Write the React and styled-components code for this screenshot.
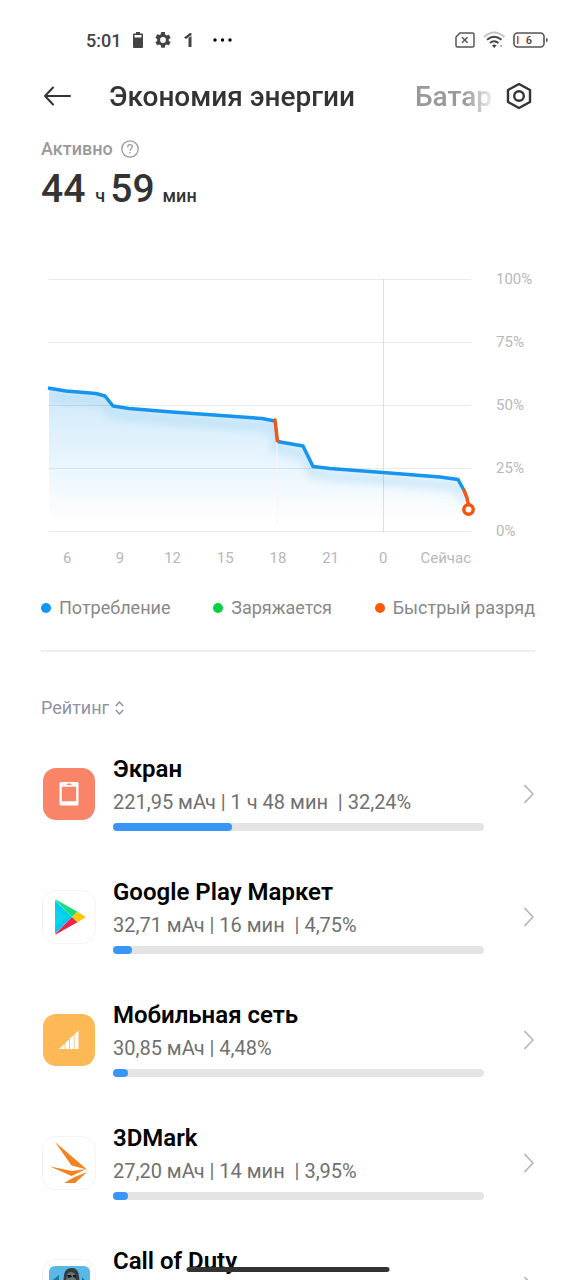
import React from 'react'
import styled, { createGlobalStyle } from 'styled-components'

const GlobalStyle = createGlobalStyle`
* {
    box-sizing:border-box;
}
body {
    margin:0;
    background-color:#fff;
    font-family:Roboto, "Noto Sans", sans-serif;
}
button {
    padding:0;
    border:0;
    background:none;
    color:inherit;
    font:inherit;
    text-align:left;
    cursor:pointer;
}
`
const Screen = styled.div`
height:100vh;
display:flex;
flex-direction:column;
overflow:hidden;
position:relative;
color:#333;
`
const StatusBar = styled.div`
display:flex;
justify-content:space-between;
align-items:center;
height:40px;
margin-top:20px;
padding:0 28px 0 86px;
flex-shrink:0;
`
const StatusGroup = styled.div`
display:flex;
align-items:center;
gap:${props => props.gap}px;
`
const Clock = styled.span`
font-size:18px;
font-weight:500;
color:#444;
`
const MoreDots = styled.svg`
margin-left:8px;
`
const Header = styled.header`
display:flex;
align-items:center;
height:72px;
padding:0 43px;
flex-shrink:0;
`
const IconButton = styled.button`
display:flex;
flex-shrink:0;
`
const Tabs = styled.nav`
display:flex;
flex:1;
min-width:0;
gap:60px;
margin:2px 14px 0 38px;
overflow:hidden;
mask-image:linear-gradient(to right, #000 93%, transparent 102%);
`
const Tab = styled.button`
font-size:28px;
line-height:40px;
font-weight:500;
white-space:nowrap;
color:${props => props.selected ? '#333' : '#999'};
`
const Summary = styled.section`
padding:5px 41px 0;
flex-shrink:0;
`
const SummaryLabel = styled.div`
display:flex;
align-items:center;
gap:8px;
font-size:18px;
line-height:24px;
font-weight:500;
color:#999;
`
const Duration = styled.div`
display:flex;
align-items:baseline;
line-height:48px;
margin-top:4px;
`
const Big = styled.span`
font-size:39px;
font-weight:500;
`
const Unit = styled.span`
font-size:18px;
font-weight:500;
margin:0 ${props => props.right}px 0 ${props => props.left}px;
`
const ChartBox = styled.section`
display:grid;
grid-template-columns:1fr 64px;
padding:59px 41px 0;
flex-shrink:0;
`
const Plot = styled.svg`
display:block;
width:calc(100% - 8px);
height:254px;
margin-left:8px;
overflow:visible;
`
const YAxis = styled.div`
display:flex;
flex-direction:column;
justify-content:space-between;
height:272px;
margin-top:-10px;
padding-left:25px;
font-size:15px;
line-height:20px;
color:#b8b8b8;
`
const XAxis = styled.div`
display:grid;
grid-template-columns:repeat(7, 6fr) 7fr;
margin-top:15px;
font-size:15px;
line-height:20px;
text-align:center;
color:#b8b8b8;
> :last-child{
    justify-self:end;
}
`
const Legend = styled.ul`
display:flex;
justify-content:space-between;
list-style:none;
margin:28px 41px 0;
padding:0 0 30px;
border-bottom:2px solid #eee;
flex-shrink:0;
`
const LegendItem = styled.li`
display:flex;
align-items:center;
gap:8px;
font-size:18px;
line-height:24px;
color:#888;
white-space:nowrap;
&::before{
    content:'';
    width:10px;
    height:10px;
    border-radius:50%;
    background-color:${props => props.color};
}
`
const SortButton = styled.button`
display:flex;
align-items:center;
align-self:flex-start;
gap:6px;
margin:44px 41px 0;
font-size:18px;
line-height:24px;
color:#8f93a8;
flex-shrink:0;
`
const List = styled.ul`
list-style:none;
margin:37px 0 0;
padding:0;
display:flex;
flex-direction:column;
gap:49px;
`
const Row = styled.button`
display:flex;
align-items:center;
width:100%;
padding:0 42px 0 43px;
`
const AppIcon = styled.span`
display:flex;
align-items:center;
justify-content:center;
width:52px;
height:52px;
border-radius:13px;
flex-shrink:0;
background-color:${props => props.color};
box-shadow:0 0 0 1px ${props => props.color === '#fff' ? '#f4f4f4' : 'transparent'};
`
const RowBody = styled.span`
display:block;
flex:1;
min-width:0;
margin:0 40px 0 18px;
`
const RowTitle = styled.span`
display:block;
font-size:24px;
line-height:24px;
font-weight:600;
color:#000;
`
const RowInfo = styled.span`
display:block;
min-height:28px;
margin:7px 0;
font-size:20px;
line-height:28px;
color:#707070;
white-space:pre;
`
const Track = styled.span`
display:block;
height:8px;
border-radius:4px;
background-color:#e4e4e4;
`
const Fill = styled.span`
display:block;
height:8px;
border-radius:4px;
background-color:#3896f8;
`
const HomeIndicator = styled.div`
position:absolute;
left:50%;
bottom:8px;
width:203px;
height:5px;
border-radius:3px;
background-color:#333;
transform:translateX(-50%);
`

const ScreenIcon = () => (
    <svg width="20" height="24" viewBox="0 0 20 24">
        <rect x=".5" y="0" width="19" height="23.500" rx="1.500" fill="#fff" />
        <rect x="2.800" y="4.800" width="14.400" height="14.400" rx=".6" fill="#fa8468" />
        <rect x="7.500" y="1.600" width="5" height="1.400" rx=".7" fill="#fa8468" />
    </svg>
)

const PlayIcon = () => (
    <svg width="32" height="36" viewBox="-1 0 32 36">
        <path fill="#00cbf5" d="M1 1.500v33L18 18z" />
        <path fill="#0ad5e8" d="M1 10v17l12-9z" />
        <path fill="#12de7c" d="M1 1Q1.600.5 2.600 1L23.500 12.800 18 18z" />
        <path fill="#e8264c" d="M1 35Q1.600 35.500 2.600 35L23.500 23.200 18 18z" />
        <path fill="#ffc80a" d="M23.500 12.800L30.500 17q1.400 1 0 2l-7 4.200L18 18z" />
    </svg>
)

const SignalIcon = () => (
    <svg width="20" height="20" viewBox="0 0 20 20" fill="#fff">
        <path d="M0 19l5.500-5.200V19zM6.300 19v-6l3.800-3.600V19zM10.900 19V8.600l3.800-3.600v14zM15.500 19V4.200L19.500.5V19z" />
    </svg>
)

const MarkIcon = () => (
    <svg width="38" height="42" viewBox="0 0 38 42" fill="#f58220">
        <path d="M5 0L37 27.500 21.500 23.500z" />
        <path d="M0 24.500L22 29l14-2-14.500 7z" />
        <path d="M37 30L25 41H14l10.500-6z" />
    </svg>
)

const DutyIcon = () => (
    <svg width="41" height="40" viewBox="0 0 41 40">
        <rect width="41" height="40" rx="6" fill="#58b8e6" />
        <path fill="#237899" d="M0 17l10-8v31H5a5 5 0 0 1-5-5zM41 19l-8-8-2 29h5a5 5 0 0 0 5-5z" />
        <path fill="#343a40" d="M15 9q1-7 8-7 6 0 7 8l1 9 7 6v15H6V25l8-5z" />
        <path fill="#697277" d="M18 8q4-4 8 0l1 7-4 4-6-4z" />
        <path fill="#171a1d" d="M18 9h4l1 2-4 1zM24 9h3v3l-3-1zM19 16h6l-1 8h-5z" />
        <path stroke="#899196" d="M14 21l6 8M31 20l-5 9" />
    </svg>
)

const apps = [
    { title: 'Экран', info: '221,95 мАч | 1 ч 48 мин  | 32,24%', percent: 32, color: '#fa8468', icon: ScreenIcon },
    { title: 'Google Play Маркет', info: '32,71 мАч | 16 мин  | 4,75%', percent: 5, color: '#fff', icon: PlayIcon },
    { title: 'Мобильная сеть', info: '30,85 мАч | 4,48%', percent: 4, color: '#fdb955', icon: SignalIcon },
    { title: '3DMark', info: '27,20 мАч | 14 мин  | 3,95%', percent: 4, color: '#fff', icon: MarkIcon },
    { title: 'Call of Duty', percent: 3, color: '#fff', icon: DutyIcon },
]

const legend = [
    { label: 'Потребление', color: '#0d99f8' },
    { label: 'Заряжается', color: '#09cf45' },
    { label: 'Быстрый разряд', color: '#fa5a0a' },
]

const StatusIcons = () => (
    <StatusBar>
        <StatusGroup gap={12}>
            <Clock>5:01</Clock>
            <svg width="10" height="16" viewBox="0 0 10 16">
                <path fill="#444" fillRule="evenodd" d="M3 0h4v1.500h2a1 1 0 0 1 1 1V15a1 1 0 0 1-1 1H1a1 1 0 0 1-1-1V2.500a1 1 0 0 1 1-1h2zM1.500 3v2.500h7V3z" />
            </svg>
            <svg width="16" height="16" viewBox="2 2 20 20">
                <path fill="#444" d="M19.140 12.940c.04-.3.060-.61.060-.94s-.02-.64-.07-.94l2.030-1.580a.5.5 0 0 0 .12-.61l-1.920-3.320a.5.5 0 0 0-.59-.22l-2.390.96a7 7 0 0 0-1.620-.94l-.36-2.540A.48.48 0 0 0 13.920 2h-3.840a.48.48 0 0 0-.47.410l-.36 2.540a7.300 7.300 0 0 0-1.620.94l-2.390-.96a.48.48 0 0 0-.59.220L2.740 8.870a.47.47 0 0 0 .12.610l2.030 1.580a6 6 0 0 0 0 1.880l-2.030 1.580a.5.5 0 0 0-.12.610l1.920 3.320c.12.220.37.290.59.220l2.390-.96c.5.380 1.030.7 1.620.940l.36 2.540c.05.240.240.410.480.410h3.840c.240 0 .440-.170.470-.410l.36-2.540a7.300 7.300 0 0 0 1.620-.940l2.390.960c.220.080.470 0 .590-.220l1.920-3.320a.47.47 0 0 0-.12-.610zM12 15.600a3.600 3.600 0 1 1 0-7.200 3.600 3.600 0 0 1 0 7.200z" />
            </svg>
            <svg width="10" height="14" viewBox="0 0 10 14">
                <path fill="#444" d="M1 4.500L7 0h1.500v2L3 6zM5.500 5L8.500 3v11h-3z" />
            </svg>
            <MoreDots width="20" height="4" viewBox="0 0 20 4">
                <circle cx="2" cy="2" r="1.700" />
                <circle cx="9.500" cy="2" r="1.700" />
                <circle cx="17" cy="2" r="1.700" />
            </MoreDots>
        </StatusGroup>
        <StatusGroup gap={8}>
            <svg width="20" height="16" viewBox="0 0 20 16" fill="none" stroke="#555" strokeWidth="1.500">
                <path d="M5 1h12.500q1.500 0 1.500 1.500v11q0 1.500-1.500 1.500h-15Q1 15 1 13.500V5z" />
                <path d="M7 5.200l5.600 5.600M12.600 5.200L7 10.800" />
            </svg>
            <svg width="22" height="18" viewBox="0 0 22 18" fill="none" strokeWidth="2">
                <path stroke="#c4c4c4" d="M1 6q10-9 20.500 0" />
                <path stroke="#444" d="M4 8.700q7-6 14.500 0M7 12q4-3.500 8.500 0" />
                <path fill="#444" d="M9 14.500q2.200-2 4.500 0L11.200 17z" />
                <path fill="#777" d="M18.500 13.500v3l-1.500-1.500z" />
            </svg>
            <svg width="35" height="16" viewBox="0 0 35 16">
                <rect x="1" y="1" width="30" height="14" rx="3.500" fill="none" stroke="#555" strokeWidth="1.600" />
                <path fill="#e03a3a" d="M4 4h1.500v8H4z" />
                <path fill="#555" d="M33 6q1.800 0 1.800 2T33 10z" />
                <text x="16" y="12" fontSize="11" fontWeight="500" fill="#444" textAnchor="middle">6</text>
            </svg>
        </StatusGroup>
    </StatusBar>
)

const Chart = () => (
    <ChartBox>
        <div>
            <Plot viewBox="0 0 422 254" preserveAspectRatio="none" role="img" aria-label="Заряд батареи">
                <defs>
                    <linearGradient id="area" gradientUnits="userSpaceOnUse" x1="0" y1="109" x2="0" y2="245">
                        <stop offset="0" stopColor="#d0e9fa" />
                        <stop offset="0.500" stopColor="#e6f4fe" />
                        <stop offset="1" stopColor="#fff" />
                    </linearGradient>
                    <filter id="soft" x="-10%" y="-30%" width="120%" height="160%">
                        <feGaussianBlur stdDeviation="4" />
                    </filter>
                    <clipPath id="under">
                        <path d="M0 109l17 3 30 2 9 3 8 10 16 2 43 4 56 4 34 2 13 3 2 20 26 5 10 20 17 2 53 4 57 5 18 2 8 15 4 15V254H0z" />
                    </clipPath>
                </defs>
                <g clipPath="url(#under)">
                    <rect width="422" height="254" fill="url(#area)" />
                    <path filter="url(#soft)" fill="none" stroke="#9fd2f2" strokeOpacity="0.450" strokeWidth="9" d="M0 117l17 3 30 2 9 3 8 10 16 2 43 4 56 4 34 2 13 3 2 20 26 5 10 20 17 2 53 4 57 5 18 2 8 15" />
                    <path d="M227 163h2v82h-2z" fill="#fff4ee" fillOpacity="0.500" />
                </g>
                <path stroke="#000" strokeOpacity="0.080" shapeRendering="crispEdges" d="M0 .5h422M0 63.500h422M0 126.500h422M0 189.500h422M0 252.500h422" />
                <path stroke="#000" strokeOpacity="0.120" shapeRendering="crispEdges" d="M334.500 0v253" />
                <g fill="none" strokeWidth="3.500" strokeLinejoin="round">
                    <path stroke="#1595ee" d="M-1 109l18 3 30 2.500 9 2.500 8 10 16 2.500 43 3.500 56 4 34 2.500 13 2.500M228.500 162.500l25.500 4.500 10 20.500 17 2 53 4 57 4.500 18 2.500 5.500 10" />
                    <path stroke="#f0581a" d="M225 141l1 0 2.500 22M414.500 210l3.500 9 1.500 7" />
                    <circle cx="419.500" cy="230.500" r="4.700" stroke="#f6560c" fill="#fff" />
                </g>
            </Plot>
            <XAxis>
                {['6', '9', '12', '15', '18', '21', '0', 'Сейчас'].map(label => <span key={label}>{label}</span>)}
            </XAxis>
        </div>
        <YAxis>
            {[100, 75, 50, 25, 0].map(value => <span key={value}>{value}%</span>)}
        </YAxis>
    </ChartBox>
)

const AppRow = ({ title, info, percent, color, icon: Icon }) => (
    <li>
        <Row>
            <AppIcon color={color}><Icon /></AppIcon>
            <RowBody>
                <RowTitle>{title}</RowTitle>
                <RowInfo>{info}</RowInfo>
                <Track>
                    <Fill style={{ width: `${percent}%` }} />
                </Track>
            </RowBody>
            <svg width="10" height="20" viewBox="0 0 10 20" fill="none" stroke="#b4b4b4" strokeWidth="1.600">
                <path d="M.5 1L9 10 .5 19" />
            </svg>
        </Row>
    </li>
)

const App = () => (
    <Screen>
        <GlobalStyle />
        <StatusIcons />
        <Header>
            <IconButton aria-label="Назад">
                <svg width="28" height="20" viewBox="0 0 28 20" fill="none" stroke="#333" strokeWidth="2" strokeLinecap="round" strokeLinejoin="round">
                    <path d="M10 1.500L2 10l8 8.500M2 10h25" />
                </svg>
            </IconButton>
            <Tabs>
                <Tab selected>Экономия энергии</Tab>
                <Tab>Батарея</Tab>
            </Tabs>
            <IconButton aria-label="Настройки">
                <svg width="28" height="28" viewBox="0 0 28 28" fill="none" stroke="#333" strokeWidth="2.400" strokeLinejoin="round">
                    <path d="M14 2l11 6v12l-11 6-11-6V8z" />
                    <circle cx="14" cy="14" r="4.800" />
                </svg>
            </IconButton>
        </Header>
        <Summary>
            <SummaryLabel>
                Активно
                <svg width="18" height="18" viewBox="0 0 18 18" fill="none" stroke="#999" strokeWidth="1.300">
                    <circle cx="9" cy="9" r="8.200" />
                    <path d="M6.700 7.200q0-2.500 2.300-2.500t2.300 2.100q0 1.100-1.200 1.900T9 10.700M9 12v1.500" />
                </svg>
            </SummaryLabel>
            <Duration>
                <Big>44</Big>
                <Unit left={10} right={5}>ч</Unit>
                <Big>59</Big>
                <Unit left={8} right={0}>мин</Unit>
            </Duration>
        </Summary>
        <Chart />
        <Legend>
            {legend.map(item => <LegendItem key={item.label} color={item.color}>{item.label}</LegendItem>)}
        </Legend>
        <SortButton>
            Рейтинг
            <svg width="9" height="14" viewBox="0 0 9 14" fill="none" stroke="#8f93a8" strokeWidth="1.500">
                <path d="M.8 5l3.700-4 3.700 4M.8 9l3.700 4 3.700-4" />
            </svg>
        </SortButton>
        <List>
            {apps.map(app => <AppRow key={app.title} {...app} />)}
        </List>
        <HomeIndicator />
    </Screen>
)

export default App
